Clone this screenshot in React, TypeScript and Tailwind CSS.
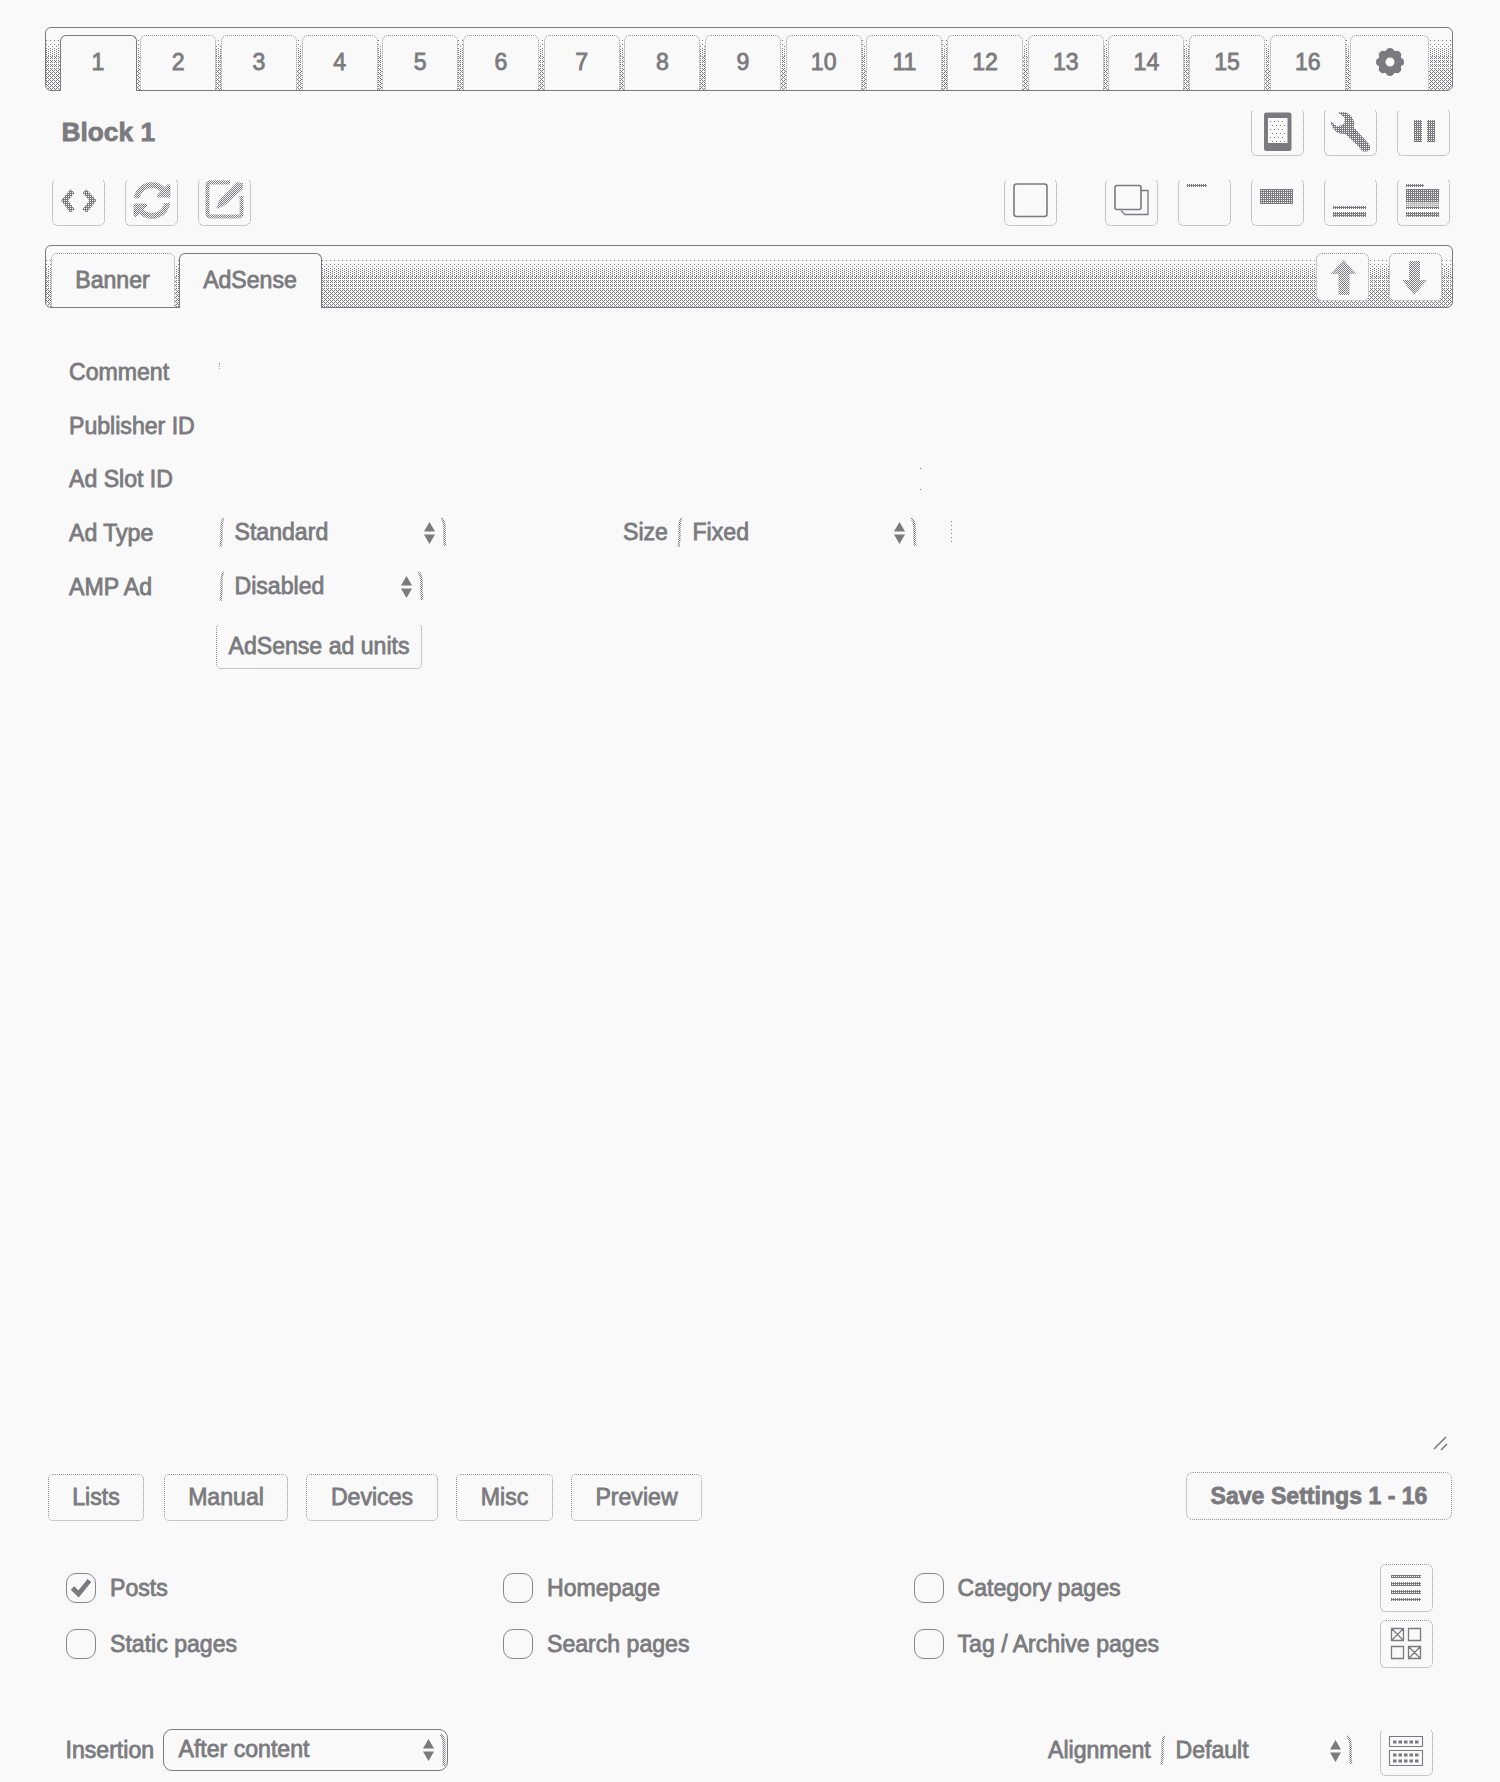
import React from "react";
import { FaSyncAlt } from "react-icons/fa";

const HALF =
  "[mask-image:repeating-conic-gradient(#000_0_25%,transparent_0_50%)] [mask-size:2px_2px]";
const DENSE = "[mask-image:conic-gradient(#000_75%,transparent_0)] [mask-size:2px_2px]";

/* Stippled gradient that fills a tab bar */
function Stipple({ tall }: { tall?: boolean }) {
  return (
    <div className="absolute inset-0 -z-10 flex flex-col overflow-hidden rounded-[6px]">
      <div className={tall ? "h-[14px]" : "h-[12px]"} />
      <div className="h-1 bg-[conic-gradient(at_1px_1px,transparent_75%,#7b7b7f_0)] bg-[length:4px_4px]" />
      <div className="h-1 bg-[conic-gradient(at_1px_1px,transparent_75%,#7b7b7f_0),conic-gradient(at_1px_1px,transparent_75%,#7b7b7f_0)] bg-[length:4px_4px] [background-position:0_0,2px_2px]" />
      <div className="h-2 bg-[conic-gradient(at_1px_1px,transparent_75%,#7b7b7f_0),conic-gradient(at_1px_1px,transparent_75%,#7b7b7f_0)] bg-[length:4px_2px] [background-position:0_0,2px_1px]" />
      <div className="h-3 bg-[conic-gradient(at_1px_1px,transparent_75%,#7b7b7f_0),conic-gradient(at_1px_1px,transparent_75%,#7b7b7f_0)] bg-[length:2px_2px,4px_4px] [background-position:0_0,1px_1px]" />
      <div className="flex-1 bg-[conic-gradient(at_1px_1px,transparent_75%,#7b7b7f_0),conic-gradient(at_1px_1px,transparent_75%,#7b7b7f_0),conic-gradient(at_1px_1px,transparent_75%,#7b7b7f_0)] bg-[length:2px_2px,4px_4px,4px_4px] [background-position:0_0,1px_1px,3px_3px]" />
    </div>
  );
}

function IconButton({
  children,
  top,
  className = "",
}: {
  children?: React.ReactNode;
  top?: boolean;
  className?: string;
}) {
  return (
    <button
      className={`h-12 w-[53px] shrink-0 rounded-[6px] border border-dotted border-[#7b7b7f]/80 bg-[#f9f9f9] ${
        top ? "" : "border-t-transparent"
      } ${className}`}
    >
      <div className="-m-px flex h-12 w-[53px]">{children}</div>
    </button>
  );
}

function Art({ children, mask = "" }: { children: React.ReactNode; mask?: string }) {
  return (
    <svg viewBox="0 0 53 48" className={`h-12 w-[53px] shrink-0 ${mask}`} fill="currentColor" stroke="none">
      {children}
    </svg>
  );
}

function Gear() {
  return (
    <svg viewBox="-15 -15 30 30" className="mb-0.5 ml-px h-[30px] w-[30px]">
      {[0, 45, 90, 135, 180, 225, 270, 315].map((a) => (
        <circle key={a} cx="0" cy="-10" r="4" fill="currentColor" transform={`rotate(${a})`} />
      ))}
      <circle r="8.200" fill="none" stroke="currentColor" strokeWidth="7.400" />
    </svg>
  );
}

function UpDown() {
  return (
    <svg viewBox="0 0 11 22" className="h-[22px] w-[11px] shrink-0" fill="currentColor">
      <path d="M5.5 0 11 9.5H0z M0 12.5h11L5.5 22z" />
    </svg>
  );
}

/* Select whose frame is only visible as curved side strokes */
function FaintSelect({ label, className }: { label: string; className: string }) {
  return (
    <div className={`flex h-[34px] items-center ${className}`}>
      <svg viewBox="0 0 5 32" className={`h-8 w-[5px] shrink-0 ${HALF}`}>
        <path d="M5 1Q3 2 2.500 9V22L1.500 30" fill="none" stroke="currentColor" strokeWidth="2.200" />
      </svg>
      <span className="ml-[10.500px] flex-1">{label}</span>
      <UpDown />
      <svg viewBox="0 0 7 32" className={`ml-[6px] h-8 w-[7px] shrink-0 ${HALF}`}>
        <path d="M0 1Q3 3 3.500 9V22L4 29" fill="none" stroke="currentColor" strokeWidth="2.500" />
      </svg>
    </div>
  );
}

function Field({ label, children }: { label: string; children?: React.ReactNode }) {
  return (
    <div className="flex h-[53.7px] items-center">
      <div className="w-[150px] pt-[1.500px]">{label}</div>
      {children}
    </div>
  );
}

function Check({ label, checked, className }: { label: string; checked?: boolean; className: string }) {
  return (
    <label className={`flex items-center gap-[14px] ${className}`}>
      <span className="flex h-[30px] w-[30px] shrink-0 items-center justify-center rounded-[10px] border border-[#7b7b7f]/90">
        {checked && (
          <svg viewBox="0 0 20 20" className="h-5 w-5">
            <path d="M1.500 10 7.500 16 18.500 2.500" fill="none" stroke="currentColor" strokeWidth="4.800" />
          </svg>
        )}
      </span>
      <span className="pt-0.5">{label}</span>
    </label>
  );
}

function TextButton({ label, className }: { label: string; className: string }) {
  return (
    <button
      className={`flex items-center justify-center rounded-[5px] border border-dotted border-[#7b7b7f]/80 pt-px ${className}`}
    >
      {label}
    </button>
  );
}

const numbers = Array.from({ length: 16 }, (_, i) => i + 1);

export default function App() {
  return (
    <div className="h-[1782px] w-[1500px] overflow-hidden bg-[#f9f9f9] pt-[27px] pr-[47px] pl-[44.500px] font-['Liberation_Sans',Arial,sans-serif] text-[23.1px] leading-none text-[#7b7b7f] [-webkit-text-stroke:0.8px_#7b7b7f]">
      <div className="relative isolate flex h-[64px] items-end rounded-[6px] border border-[#7b7b7f] pl-[14px]">
        <Stipple />
        {numbers.map((n) => (
          <div key={n} className={n === 1 ? "z-10 -mb-px w-[80.7px] shrink-0" : "w-[80.7px] shrink-0"}>
            <div
              className={
                n === 1
                  ? "flex h-[56px] w-[77px] items-center justify-center rounded-t-[6px] border border-b-0 border-[#7b7b7f] bg-[#f9f9f9] pb-px"
                  : "flex h-[55px] w-[76px] items-center justify-center rounded-t-[6px] border border-b-0 border-dotted border-[#7b7b7f]/80 bg-[#f9f9f9]"
              }
            >
              {n}
            </div>
          </div>
        ))}
        <div className="-ml-px flex h-[55px] w-[79px] shrink-0 items-center justify-center rounded-t-[6px] border border-b-0 border-dotted border-[#7b7b7f]/80 bg-[#f9f9f9]">
          <Gear />
        </div>
      </div>

      <div className="mt-[17px] flex h-12 items-center pr-[3px] pl-[17px]">
        <h1 className="flex-1 text-[26.3px] font-bold">Block 1</h1>
        <div className="flex gap-5">
          <IconButton>
            <Art>
              <path
                fillRule="evenodd"
                d="M15.500 4.500H38a2.500 2.500 0 0 1 2.500 2.500v33.500A2.500 2.500 0 0 1 38 43H15.500a2.500 2.500 0 0 1-2.500-2.500V7A2.500 2.500 0 0 1 15.500 4.500ZM17 10v25h19.500V10Z"
              />
              {[13, 17, 21, 25, 29, 33].map((y, i) =>
                [19, 23, 27, 31].map((x) => <rect key={`${x}-${y}`} x={x + (i % 2) * 2} y={y} width="1" height="1" />)
              )}
            </Art>
          </IconButton>
          <IconButton>
            <Art mask={DENSE}>
              <path d="M14.500 4H21Q27 6 29.500 12Q31 16 29.500 19L45 36Q47 39 45.500 42L43 43.500H39Q37 42 36 40L21.500 26Q11 27 7 16V13.500L12.500 18Q17 18.500 20 15.500Q21.500 12 20 9L14.500 5Z" />
            </Art>
          </IconButton>
          <IconButton>
            <Art mask={DENSE}>
              <path d="M17 12h8v22h-8zM30 12h8v22h-8z" />
            </Art>
          </IconButton>
        </div>
      </div>

      <div className="mt-[22px] flex h-12 justify-between pr-[3px] pl-[7.500px]">
        <div className="flex gap-5">
          <IconButton>
            <Art mask={DENSE}>
              <path d="M20.500 13 12.500 22.500l8 10.500M32.500 13l8.500 9.500-8.500 10.500" fill="none" stroke="currentColor" strokeWidth="5.500" />
            </Art>
          </IconButton>
          <IconButton>
            <FaSyncAlt className={`mt-[3px] ml-2 h-[39px] w-[38px] ${HALF}`} />
          </IconButton>
          <IconButton>
            <Art mask={HALF}>
              <path d="M32 4.500H12Q9.500 4.500 9.500 7V36Q9.500 38.500 12 38.500H41Q43.500 38.500 43.500 36V18" fill="none" stroke="currentColor" strokeWidth="3.800" />
              <path d="M32 3.500H10.500Q8.500 4 8.500 6V37" fill="none" stroke="currentColor" strokeWidth="1.500" />
              <path d="M39.500 4 45 5V11L26 28 18 31 21 22.500Z" />
            </Art>
          </IconButton>
        </div>
        <div className="flex gap-5">
          <IconButton className="mr-7">
            <Art>
              <rect x="10" y="6" width="33" height="32.500" rx="2.500" fill="none" stroke="currentColor" strokeWidth="1.600" />
            </Art>
          </IconButton>
          <IconButton>
            <Art>
              <path d="M35.500 12.500H43V36.500H20l-4-4" fill="none" stroke="currentColor" strokeWidth="1.300" />
              <rect x="10" y="7.500" width="26" height="24" rx="2" fill="none" stroke="currentColor" strokeWidth="1.600" />
            </Art>
          </IconButton>
          <IconButton>
            <Art mask={DENSE}>
              <path d="M9 6h20v3H9z" />
            </Art>
          </IconButton>
          <IconButton>
            <Art mask={DENSE}>
              <path d="M9 11h33v15H9z" />
            </Art>
          </IconButton>
          <IconButton>
            <Art mask={DENSE}>
              <path d="M9 28h33v3H9zM9 34h33v5H9z" />
            </Art>
          </IconButton>
          <IconButton>
            <Art mask={DENSE}>
              <path d="M9 6h18v3H9zM9 11h33v13H9zM9 29h33v2H9zM9 34h33v5H9z" />
              <path d="M9 24h33v5H9z" opacity=".5" />
            </Art>
          </IconButton>
        </div>
      </div>

      <div className="relative isolate mt-[19px] flex h-[63px] items-end rounded-[6px] border border-[#7b7b7f] pr-[10px] pl-[5px]">
        <Stipple tall />
        <div className="flex h-[54px] w-[124px] items-center justify-center rounded-t-[6px] border border-b-0 border-dotted border-[#7b7b7f]/80 bg-[#f9f9f9]">
          <span>Banner</span>
        </div>
        <div className="z-10 -mb-px ml-[4px] flex h-[55px] w-[143px] items-center justify-center rounded-t-[6px] border border-b-0 border-[#7b7b7f] bg-[#f9f9f9]">
          <span className="pb-px">AdSense</span>
        </div>
        <div className="mb-[6px] ml-auto flex gap-5">
          <IconButton top>
            <Art mask={HALF}>
              <path d="M27.500 6.500 40 21H33.500V42H22.500V21H15Z" />
            </Art>
          </IconButton>
          <IconButton top>
            <Art mask={HALF}>
              <path d="M25 42 38 27H31V8H20V27H13Z" />
            </Art>
          </IconButton>
        </div>
      </div>

      <div className="mt-[37px] flex h-[376px] flex-col pl-[24.500px]">
        <Field label="Comment">
          <span className="-mt-3 h-1.5 border-l border-dotted border-[#7b7b7f]/70" />
        </Field>
        <Field label="Publisher ID" />
        <Field label="Ad Slot ID">
          <span className="ml-[701px] flex h-[22px] w-px flex-col justify-between">
            <i className="h-px w-px bg-[#7b7b7f]" />
            <i className="h-px w-px bg-[#7b7b7f]" />
          </span>
        </Field>
        <Field label="Ad Type">
          <FaintSelect label="Standard" className="w-[229px]" />
          <span className="ml-[175px] w-[54px]">Size</span>
          <FaintSelect label="Fixed" className="w-[241px]" />
          <span className="ml-[33px] h-6 w-px bg-[linear-gradient(#7b7b7f_1px,transparent_1px)] bg-[length:1px_4px]" />
        </Field>
        <Field label="AMP Ad">
          <FaintSelect label="Disabled" className="w-[206px]" />
        </Field>
        <TextButton label="AdSense ad units" className="mt-[10px] ml-[147px] h-[46px] w-[206px] border-t-transparent" />
      </div>

      <div className="mt-[700px] flex h-[23px] justify-end pr-[5px]">
        <svg viewBox="0 0 15 15" className="mt-[15px] h-[15px] w-[15px] shrink-0" fill="none" stroke="currentColor" strokeWidth="1.600">
          <path d="M1 13 13 1M8 14l6-6" />
        </svg>
      </div>

      <div className="mt-[29px] flex h-12 items-end pr-px pl-[3.500px]">
        <TextButton label="Lists" className="h-[47px] w-[96px]" />
        <TextButton label="Manual" className="ml-5 h-[47px] w-[124px]" />
        <TextButton label="Devices" className="ml-[18px] h-[47px] w-[132px]" />
        <TextButton label="Misc" className="ml-[18px] h-[47px] w-[97px]" />
        <TextButton label="Preview" className="ml-[18px] h-[47px] w-[131px]" />
        <TextButton label="Save Settings 1 - 16" className="mb-px ml-auto h-12 w-[266px] rounded-[7px] font-bold" />
      </div>

      <div className="mt-[43px] flex flex-col gap-2 pr-[20px] pl-[21.500px]">
        <div className="flex h-12 items-center">
          <Check label="Posts" checked className="w-[437px]" />
          <Check label="Homepage" className="w-[410.500px]" />
          <Check label="Category pages" className="flex-1" />
          <IconButton top>
            <Art mask={DENSE}>
              <path d="M11 11h30v3H11zM11 18h30v4H11zM11 26h30v4H11zM11 34h30v3H11z" />
            </Art>
          </IconButton>
        </div>
        <div className="flex h-12 items-center">
          <Check label="Static pages" className="w-[437px]" />
          <Check label="Search pages" className="w-[410.500px]" />
          <Check label="Tag / Archive pages" className="flex-1" />
          <IconButton top>
            <Art>
              <path
                d="M11.500 8.500h12v12h-12zM28.500 8.500h12v12h-12zM11.500 26.500h12v12h-12zM28.500 26.500h12v12h-12zM12 9l11 11m0-11L12 20M29 27l11 11m0-11L29 38"
                fill="none"
                stroke="currentColor"
                strokeWidth="1.300"
              />
            </Art>
          </IconButton>
        </div>
      </div>

      <div className="mt-[60px] flex h-12 items-center pr-[20px] pl-[21px]">
        <span className="w-[97px] pb-[3px]">Insertion</span>
        <div className="mb-[5px] flex h-[42px] w-[285px] items-center rounded-[9px] border border-[#7b7b7f] pr-0 pl-[15px]">
          <span className="flex-1">After content</span>
          <UpDown />
          <svg viewBox="0 0 7 32" className={`ml-[6px] h-8 w-[7px] shrink-0 ${HALF}`}>
            <path d="M0 0Q4 3 4 9V32" fill="none" stroke="currentColor" strokeWidth="3" />
          </svg>
        </div>
        <span className="ml-auto w-[112px] pb-[3px]">Alignment</span>
        <FaintSelect label="Default" className="mb-[3px] w-[194px]" />
        <IconButton className="ml-[26px]">
          <Art>
            <path d="M9.500 8.500h33v10h-33zM9.500 22.500h33v15h-33z" fill="none" stroke="currentColor" strokeWidth="1.100" />
            <path d="M13 14h27M13 27h27M13 33h27" fill="none" stroke="currentColor" strokeWidth="3" strokeDasharray="3.500 2" />
          </Art>
        </IconButton>
      </div>
    </div>
  );
}
